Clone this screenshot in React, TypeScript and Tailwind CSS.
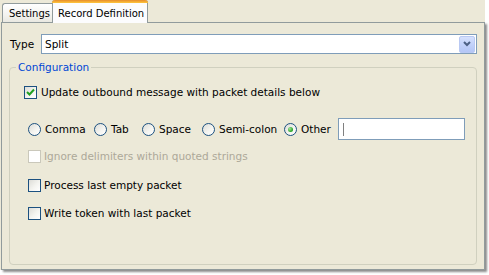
import React from "react";

const font = { fontFamily: '"DejaVu Sans", sans-serif' };

function CheckBox({ checked = false, disabled = false }: { checked?: boolean; disabled?: boolean }) {
  return (
    <span
      className={
        "relative inline-block w-[13px] h-[13px] shrink-0 border " +
        (disabled
          ? "border-[#CAC8BB] bg-white"
          : "border-[#1C5180] bg-[linear-gradient(135deg,#DCDCD7_0%,#F4F4F0_55%,#FFFFFF_100%)]")
      }
    >
      {checked && (
        <svg className="absolute left-[1px] top-[1px]" width="9" height="9" viewBox="0 0 9 9">
          <path d="M1 4 L3.5 6.5 L8 1.5" fill="none" stroke="#21A121" strokeWidth="2" />
        </svg>
      )}
    </span>
  );
}

function Radio({ checked = false }: { checked?: boolean }) {
  return (
    <span className="relative inline-flex items-center justify-center w-[13px] h-[13px] shrink-0 rounded-full border border-[#1C5180] bg-[linear-gradient(135deg,#DCDCD7_0%,#F4F4F0_55%,#FFFFFF_100%)]">
      {checked && <span className="w-[5px] h-[5px] rounded-full bg-[radial-gradient(circle_at_35%_35%,#A6E59A,#21A121_70%)]" />}
    </span>
  );
}

function RadioItem({ label, w, checked = false }: { label: string; w: string; checked?: boolean }) {
  return (
    <div className={"flex items-center h-[14px] shrink-0 " + w}>
      <Radio checked={checked} />
      <span className="ml-[4px] leading-[13px] whitespace-nowrap">{label}</span>
    </div>
  );
}

export default function App() {
  return (
    <div className="w-[489px] h-[275px] bg-white text-[10.5px] text-black overflow-hidden" style={font}>
      <div className="w-[485px] h-[270px] bg-[#ECE9D8] flex flex-col">
        <div className="h-[22px] flex items-end pl-[2px]">
          <div className="w-[50px] h-[19px] border-l border-t border-[#919B9C] rounded-tl-[3px] bg-[linear-gradient(#FFFFFF,#F3F3EF_60%,#E9E8E1)] flex items-center pl-[6px] text-[10px] leading-[13px] whitespace-nowrap overflow-hidden">
            Settings
          </div>
          <div className="relative z-10 -mb-[1px] w-[96px] h-[23px] border-l border-r border-[#919B9C] bg-[#FCFCFE] rounded-t-[3px] flex flex-col">
            <div className="h-[3px] rounded-t-[3px] bg-[linear-gradient(#E68B2C,#FFC73C)] -mx-[1px]" />
            <div className="flex-1 flex items-center pl-[5px] text-[10px] leading-[13px] whitespace-nowrap">Record Definition</div>
          </div>
        </div>
        <div className="ml-[1px] w-[484px] h-[248px] border border-[#919B9C] bg-[#ECE9D8] shadow-[2px_2px_2px_rgba(0,0,0,0.45)] pt-[11px] pl-[7px] pr-[7px]">
          <div className="flex items-center h-[20px]">
            <span className="w-[32px] pl-[1px] leading-[13px]">Type</span>
            <div className="flex-1 h-[20px] border border-[#7F9DB9] bg-white flex items-center">
              <span className="flex-1 pl-[3px] leading-[13px]">Split</span>
              <span className="w-[16px] h-[17px] mr-[1px] rounded-[2px] border border-[#B9C9F3] bg-[linear-gradient(#D6E1FD,#C2D2FA_50%,#B4C6F6)] flex items-center justify-center">
                <svg width="8" height="6" viewBox="0 0 8 6">
                  <path d="M1 1 L4 4 L7 1" fill="none" stroke="#4D6185" strokeWidth="2" />
                </svg>
              </span>
            </div>
          </div>
          <fieldset className="mt-[7px] h-[204px] border border-[#D0D0BF] rounded-[4px] pl-[6px] pr-[8px]">
            <legend className="px-[2px] text-[#0046D5] leading-[13px]">Configuration</legend>
            <div className="flex flex-col">
              <div className="mt-[11px] ml-[8px] flex items-center h-[14px]">
                <CheckBox checked />
                <span className="ml-[4px] leading-[13px]">Update outbound message with packet details below</span>
              </div>
              <div className="mt-[19px] ml-[12px] flex items-center h-[22px]">
                <RadioItem label="Comma" w="w-[66px]" />
                <RadioItem label="Tab" w="w-[48px]" />
                <RadioItem label="Space" w="w-[60px]" />
                <RadioItem label="Semi-colon" w="w-[82px]" />
                <RadioItem label="Other" w="w-[54px]" checked />
                <div className="w-[127px] h-[22px] border border-[#7F9DB9] bg-white flex items-center pl-[4px]">
                  <span className="w-[1px] h-[13px] bg-[#808080]" />
                </div>
              </div>
              <div className="mt-[9px] ml-[12px] flex items-center h-[14px]">
                <CheckBox disabled />
                <span className="ml-[3px] leading-[13px] text-[#ACA899]">Ignore delimiters within quoted strings</span>
              </div>
              <div className="mt-[15px] ml-[12px] flex items-center h-[14px]">
                <CheckBox />
                <span className="ml-[3px] leading-[13px]">Process last empty packet</span>
              </div>
              <div className="mt-[14px] ml-[12px] flex items-center h-[14px]">
                <CheckBox />
                <span className="ml-[3px] leading-[13px]">Write token with last packet</span>
              </div>
            </div>
          </fieldset>
        </div>
      </div>
    </div>
  );
}
